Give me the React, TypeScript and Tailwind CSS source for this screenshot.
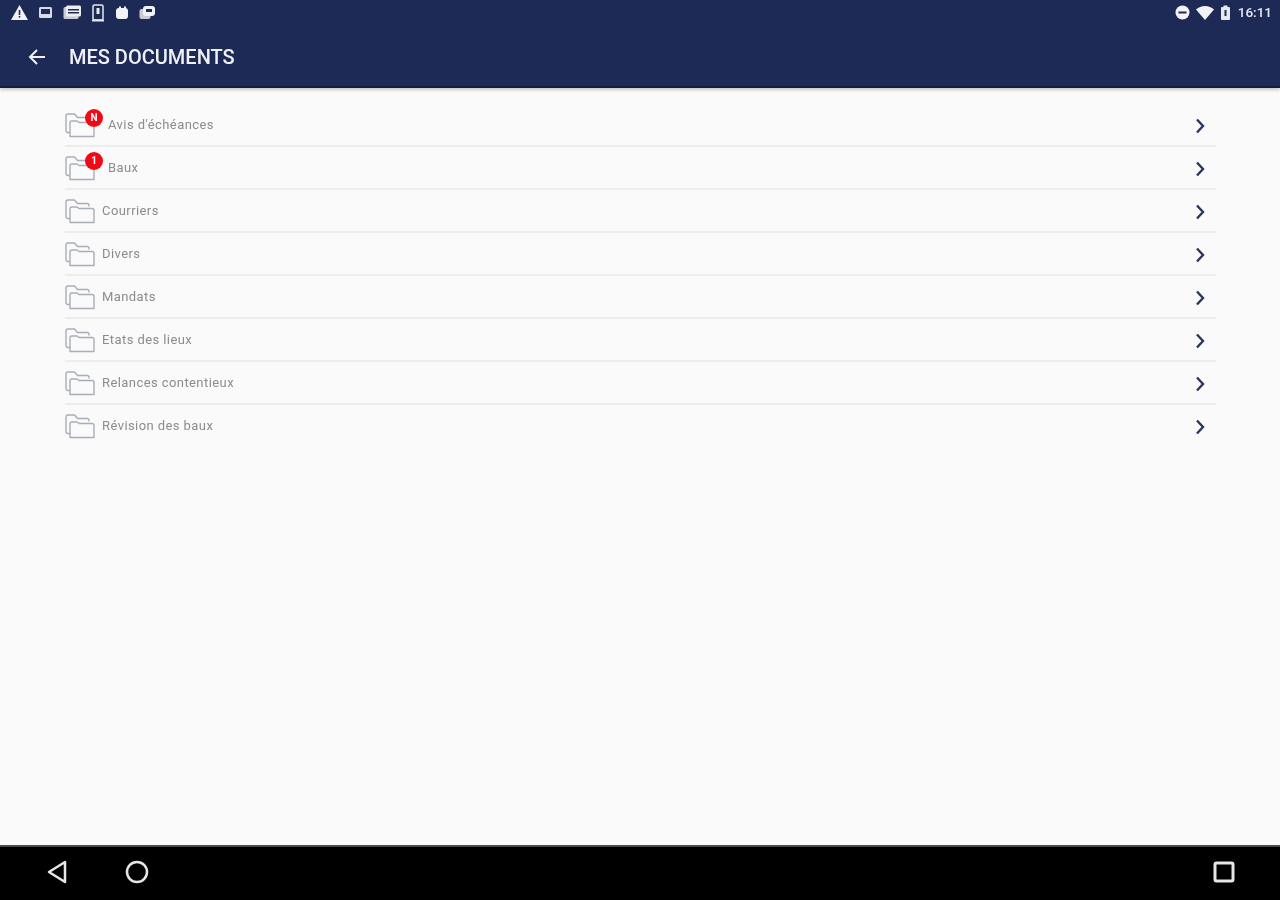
import React from "react";

const rows = [
  { label: "Avis d'échéances", badge: "N" },
  { label: "Baux", badge: "1" },
  { label: "Courriers" },
  { label: "Divers" },
  { label: "Mandats" },
  { label: "Etats des lieux" },
  { label: "Relances contentieux" },
  { label: "Révision des baux" },
];

function Folder() {
  return (
    <svg width="30" height="26" viewBox="0 0 30 26" fill="none" stroke="#a9adb8" strokeWidth="1.4" strokeLinejoin="round" className="shrink-0">
      <path d="M5 20.5H3a2 2 0 0 1-2-2V4a2 2 0 0 1 2-2h6.5l3 3.5H22a2 2 0 0 1 2 2v1" />
      <path d="M5 24.5V11a2 2 0 0 1 2-2h5l2 1.5h13a2 2 0 0 1 2 2v12H5z" />
    </svg>
  );
}

function Chevron() {
  return (
    <svg width="10" height="16" viewBox="0 0 10 16" fill="none" stroke="#2a3560" strokeWidth="2.4" className="shrink-0">
      <path d="M2 1.5 8 8l-6 6.500" />
    </svg>
  );
}

function StatusIcons() {
  return (
    <div className="flex items-center gap-[10px]">
      <svg width="17" height="15" viewBox="0 0 17 15"><path d="M8.500 0 17 15H0z" fill="#f2f3f6" /><rect x="7.700" y="5" width="1.600" height="5" fill="#1e2a56" /><rect x="7.700" y="11" width="1.600" height="1.600" fill="#1e2a56" /></svg>
      <svg width="15" height="13" viewBox="0 0 15 13"><rect x="1" y="1" width="13" height="11" rx="1.500" fill="#d9dbe3" /><rect x="3" y="3" width="9" height="5" fill="#1e2a56" /></svg>
      <svg width="18" height="15" viewBox="0 0 18 15"><rect x="0.500" y="2" width="15" height="12" rx="1.500" fill="#c9ccd6" /><rect x="3" y="0.500" width="15" height="11" rx="1.500" fill="#eceef2" /><rect x="5" y="4" width="11" height="1.500" fill="#1e2a56" /><rect x="5" y="7" width="11" height="1.500" fill="#1e2a56" /></svg>
      <svg width="14" height="18" viewBox="0 0 14 18" fill="none"><rect x="2" y="1" width="10" height="15" rx="1.500" stroke="#e6e8ee" strokeWidth="1.500" /><rect x="5.500" y="4" width="3" height="6" fill="#e6e8ee" /><rect x="1" y="15.500" width="12" height="2" fill="#e6e8ee" /></svg>
      <svg width="14" height="14" viewBox="0 0 14 14"><rect x="1" y="2" width="12" height="11" rx="3" fill="#f2f3f6" /><rect x="4" y="0.500" width="2" height="3" fill="#f2f3f6" /><rect x="9" y="0.500" width="2" height="3" fill="#f2f3f6" /></svg>
      <svg width="17" height="15" viewBox="0 0 17 15"><rect x="0.500" y="4" width="11" height="10" rx="2" fill="#c9ccd6" /><rect x="4" y="1" width="12" height="10" rx="3" fill="#f2f3f6" /><rect x="7" y="4" width="6" height="3" fill="#1e2a56" /></svg>
    </div>
  );
}

function StatusRight() {
  return (
    <div className="flex items-center gap-[6px]">
      <svg width="15" height="15" viewBox="0 0 15 15"><circle cx="7.500" cy="7.500" r="7" fill="#f2f3f6" /><rect x="3.500" y="6.500" width="8" height="2" fill="#1e2a56" /></svg>
      <svg width="18" height="14" viewBox="0 0 18 14"><path d="M0 3.500C2.500 1.200 5.500 0 9 0s6.500 1.200 9 3.500L9 14z" fill="#f2f3f6" /></svg>
      <svg width="11" height="15" viewBox="0 0 11 15"><rect x="1" y="2" width="9" height="13" rx="1" fill="#e6e8ee" /><rect x="3.500" y="0.500" width="4" height="2" fill="#e6e8ee" /><rect x="4.500" y="5" width="2" height="6" fill="#1e2a56" /></svg>
      <span className="ml-[1px] text-[13.500px] font-medium text-[#e8eaf0]">16:11</span>
    </div>
  );
}

export default function App() {
  return (
    <div className="flex h-[900px] w-[1280px] flex-col overflow-hidden bg-[#fafafa] font-['Roboto',sans-serif]">
      <header className="flex h-[88px] shrink-0 flex-col border-b-2 border-[#141c40] bg-[#1e2a56] shadow-[0_2px_3px_rgba(0,0,0,0.2)]">
        <div className="flex h-[25px] items-center justify-between pl-[11px] pr-[8px] blur-[0.4px]">
          <StatusIcons />
          <StatusRight />
        </div>
        <div className="flex flex-1 items-center pl-[28px] pt-[3px] blur-[0.4px]">
          <svg width="18" height="16" viewBox="0 0 18 16" fill="none" stroke="#f2f3f6" strokeWidth="2" className="mr-[23px]">
            <path d="M17 8H2M9 1 2 8l7 7" />
          </svg>
          <h1 className="text-[20px] font-medium text-[#f0f1f5]">MES DOCUMENTS</h1>
        </div>
      </header>

      <main className="flex-1 pl-[65px] pr-[64px] pt-[16px]">
        {rows.map((r, i) => (
          <div key={r.label} className={`flex h-[43px] items-center pr-[11px] border-b-2 ${i < rows.length - 1 ? "border-[#ededed]" : "border-transparent"}`}>
            <div className="relative flex shrink-0 items-center blur-[0.4px]">
              <Folder />
              {r.badge && (
                <span className="absolute right-[-8px] top-[-3px] flex h-[18px] w-[18px] items-center justify-center rounded-full bg-[#f00a17] text-[10px] font-bold text-white">
                  {r.badge}
                </span>
              )}
            </div>
            <span className={`text-[13px] tracking-[0.42px] text-[#8c8c8c] blur-[0.4px] ${r.badge ? "ml-[13px]" : "ml-[7px]"}`}>{r.label}</span>
            <span className="ml-auto translate-y-[1px] blur-[0.4px]"><Chevron /></span>
          </div>
        ))}
      </main>

      <nav className="flex h-[55px] shrink-0 items-center border-t-2 border-[#4a4a4a] bg-black pb-[4px] pl-[47px] pr-[45px]">
        <svg width="20" height="24" viewBox="0 0 20 24" fill="none" stroke="#e6e6e6" strokeWidth="2.500" strokeLinejoin="round">
          <path d="M18 2v20L2 12z" />
        </svg>
        <svg width="24" height="24" viewBox="0 0 24 24" fill="none" stroke="#e6e6e6" strokeWidth="2.500" className="ml-[58px]">
          <circle cx="12" cy="12" r="10" />
        </svg>
        <svg width="22" height="22" viewBox="0 0 22 22" fill="none" stroke="#e6e6e6" strokeWidth="3" className="ml-auto">
          <rect x="2" y="2" width="18" height="18" rx="1.500" />
        </svg>
      </nav>
    </div>
  );
}
